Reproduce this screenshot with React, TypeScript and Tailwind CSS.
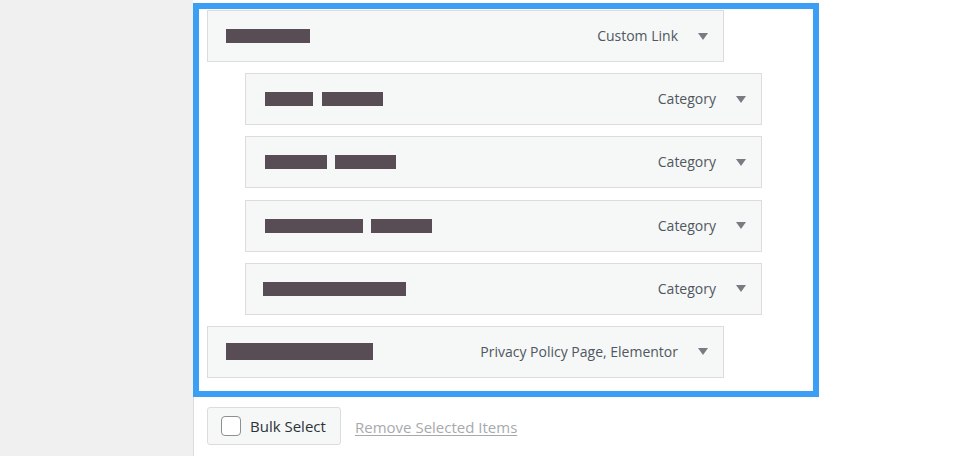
import React from 'react';

type MenuItem = {
  bars: { left: number; width: number }[];
  label: string;
  nested: boolean;
  barH?: number;
};

const ITEMS: MenuItem[] = [
  { bars: [{ left: 18, width: 84 }], label: 'Custom Link', nested: false },
  { bars: [{ left: 19, width: 48 }, { left: 76, width: 61 }], label: 'Category', nested: true },
  { bars: [{ left: 19, width: 62 }, { left: 89, width: 61 }], label: 'Category', nested: true },
  { bars: [{ left: 19, width: 98 }, { left: 125, width: 61 }], label: 'Category', nested: true },
  { bars: [{ left: 17, width: 143 }], label: 'Category', nested: true },
  { bars: [{ left: 18, width: 147 }], label: 'Privacy Policy Page, Elementor', nested: false, barH: 17 },
];

function Caret() {
  return (
    <svg width="10" height="7" viewBox="0 0 10 7" className="shrink-0">
      <path d="M0 0h10L5 7z" fill="#787c82" />
    </svg>
  );
}

function Row({ item }: { item: MenuItem }) {
  return (
    <div className={`flex ${item.nested ? 'pl-[38px]' : ''}`}>
      <div className="w-[517px] h-[52px] border border-[#dcdcde] bg-[#f6f7f7] flex items-center">
        <div className="flex-1 flex items-center h-full">
          {item.bars.map((b, i) => (
            <div
              key={i}
              className="bg-[#594d55]"
              style={{ marginLeft: i === 0 ? b.left : b.left - (item.bars[i - 1].left + item.bars[i - 1].width), width: b.width, height: item.barH ?? 14 }}
            />
          ))}
        </div>
        <span className="text-[14px] text-[#50575e] mr-[20px] leading-none">{item.label}</span>
        <div className="mr-[15px]">
          <Caret />
        </div>
      </div>
    </div>
  );
}

export default function App() {
  return (
    <div
      className="flex w-[970px] h-[456px] bg-white overflow-hidden"
      style={{ fontFamily: '"Open Sans", "Noto Sans", sans-serif' }}
    >
      <div className="w-[193px] shrink-0 bg-[#f0f0f1]" />
      <div className="flex-1 flex flex-col">
        <div className="mt-[3px] w-[626px] border-[6px] border-[#3a9ff5] bg-white pl-[8px] pt-px pb-[13px] flex flex-col gap-[11.2px]">
          {ITEMS.map((it, i) => (
            <Row key={i} item={it} />
          ))}
        </div>
        <div className="flex-1 border-l border-[#dcdcde] pl-[13px] pt-[10px] flex items-start gap-[14px]">
          <button className="h-[38px] w-[134px] flex items-center gap-[9px] pl-[13px] rounded-[3px] border border-[#dcdcde] bg-[#f6f7f7]">
            <span className="w-[20px] h-[20px] rounded-[4px] border border-[#8c8f94] bg-white" />
            <span className="text-[15px] text-[#2c3338]">Bulk Select</span>
          </button>
          <a className="mt-[9px] text-[15px] text-[#a7aaad] underline underline-offset-2">Remove Selected Items</a>
        </div>
      </div>
    </div>
  );
}
